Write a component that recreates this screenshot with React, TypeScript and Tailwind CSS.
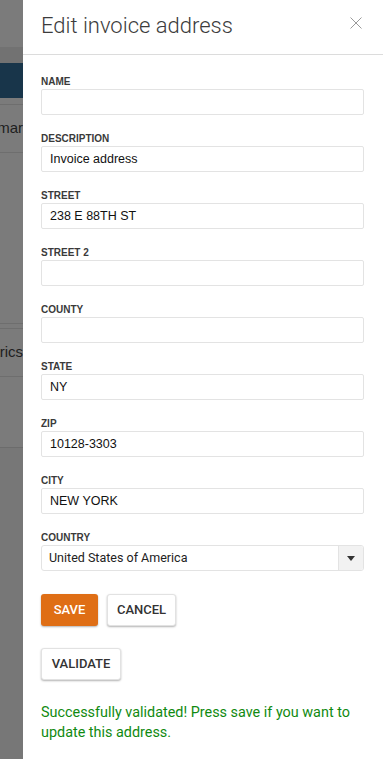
import React from "react";

const fields = [
  { label: "NAME", value: "" },
  { label: "DESCRIPTION", value: "Invoice address" },
  { label: "STREET", value: "238 E 88TH ST" },
  { label: "STREET 2", value: "" },
  { label: "COUNTY", value: "" },
  { label: "STATE", value: "NY" },
  { label: "ZIP", value: "10128-3303" },
  { label: "CITY", value: "NEW YORK" },
];

const labelCls =
  "block h-[14px] mb-[1px] text-[10px] leading-[15px] font-bold text-[#3a3a3a] [font-family:'Liberation_Sans',Arial,sans-serif]";

export default function App() {
  return (
    <div className="flex w-[383px] h-[759px] overflow-hidden bg-white">
      {/* dimmed page behind the drawer */}
      <div className="w-[23px] shrink-0 flex flex-col bg-[#7b7b7b] overflow-hidden text-[15px] text-[#1e1e1e] [font-family:'Liberation_Sans',Arial,sans-serif]">
        <div className="h-[47px]" />
        <div className="h-[16px] bg-[#727272]" />
        <div className="h-[35px] bg-[#18354a]" />
        <div className="h-[6px]" />
        <div className="h-[1px] bg-[#6e6e6e]" />
        <div className="h-[47px] flex items-center justify-end whitespace-nowrap">mar</div>
        <div className="h-[1px] bg-[#6e6e6e]" />
        <div className="h-[170px]" />
        <div className="h-[1px] bg-[#6e6e6e]" />
        <div className="h-[4px]" />
        <div className="h-[1px] bg-[#6e6e6e]" />
        <div className="h-[47px] flex items-center justify-end whitespace-nowrap">trics</div>
        <div className="h-[1px] bg-[#6e6e6e]" />
        <div className="h-[70px]" />
        <div className="flex-1 bg-[#777777] border-t border-[#6c6c6c]" />
      </div>

      {/* drawer */}
      <div className="flex-1 flex flex-col bg-white">
        <div className="h-[55px] shrink-0 flex items-center justify-between pl-[18px] pr-[21px] border-b border-[#dcdcdc]">
          <h1 className="text-[22px] font-light text-[#3c3c3c] leading-none -mt-[2px] [font-family:Roboto,sans-serif]">
            Edit invoice address
          </h1>
          <svg width="12" height="12" viewBox="0 0 12 12" className="-mt-[8px]">
            <path d="M0.5 0.5L11.5 11.5M11.5 0.5L0.5 11.5" stroke="#9a9a9a" strokeWidth="1" />
          </svg>
        </div>

        <div className="pl-[18px] pr-[19px] pt-[19px]">
          {fields.map((f) => (
            <div key={f.label} className="mb-[16px]">
              <label className={labelCls}>{f.label}</label>
              <div className="h-[26px] flex items-center px-[8px] border border-[#e3e3e3] rounded-[2px] text-[12.5px] text-[#111] [font-family:'Liberation_Sans',Arial,sans-serif]">
                {f.value}
              </div>
            </div>
          ))}

          <div>
            <label className={labelCls}>COUNTRY</label>
            <div className="h-[26px] flex border border-[#e3e3e3] rounded-[3px] overflow-hidden">
              <div className="flex-1 flex items-center px-[7px] text-[12.5px] text-[#222] [font-family:Roboto,sans-serif]">
                United States of America
              </div>
              <div className="w-[25px] flex items-center justify-center bg-[#f2f2f2] border-l border-[#e3e3e3]">
                <svg width="8" height="5" viewBox="0 0 8 5">
                  <path d="M0 0H8L4 5Z" fill="#333" />
                </svg>
              </div>
            </div>
          </div>

          <div className="flex gap-[9px] mt-[23px] [font-family:Roboto,sans-serif]">
            <button className="h-[32px] w-[57px] rounded-[3px] bg-[#df6e15] text-white text-[13px] font-medium shadow-[0_1px_2px_rgba(0,0,0,0.3)]">
              SAVE
            </button>
            <button className="h-[32px] w-[69px] rounded-[3px] bg-white text-[#333] text-[13px] font-medium border border-[#e2e2e2] shadow-[0_1px_2px_rgba(0,0,0,0.3)]">
              CANCEL
            </button>
          </div>

          <button className="mt-[22px] h-[32px] w-[80px] rounded-[3px] bg-white text-[#333] text-[13px] font-medium border border-[#e2e2e2] shadow-[0_1px_2px_rgba(0,0,0,0.3)] [font-family:Roboto,sans-serif]">
            VALIDATE
          </button>

          <p className="mt-[23px] text-[14.4px] leading-[20px] text-[#118a11] [font-family:Roboto,sans-serif]">
            Successfully validated! Press save if you want to update this address.
          </p>
        </div>
      </div>
    </div>
  );
}
